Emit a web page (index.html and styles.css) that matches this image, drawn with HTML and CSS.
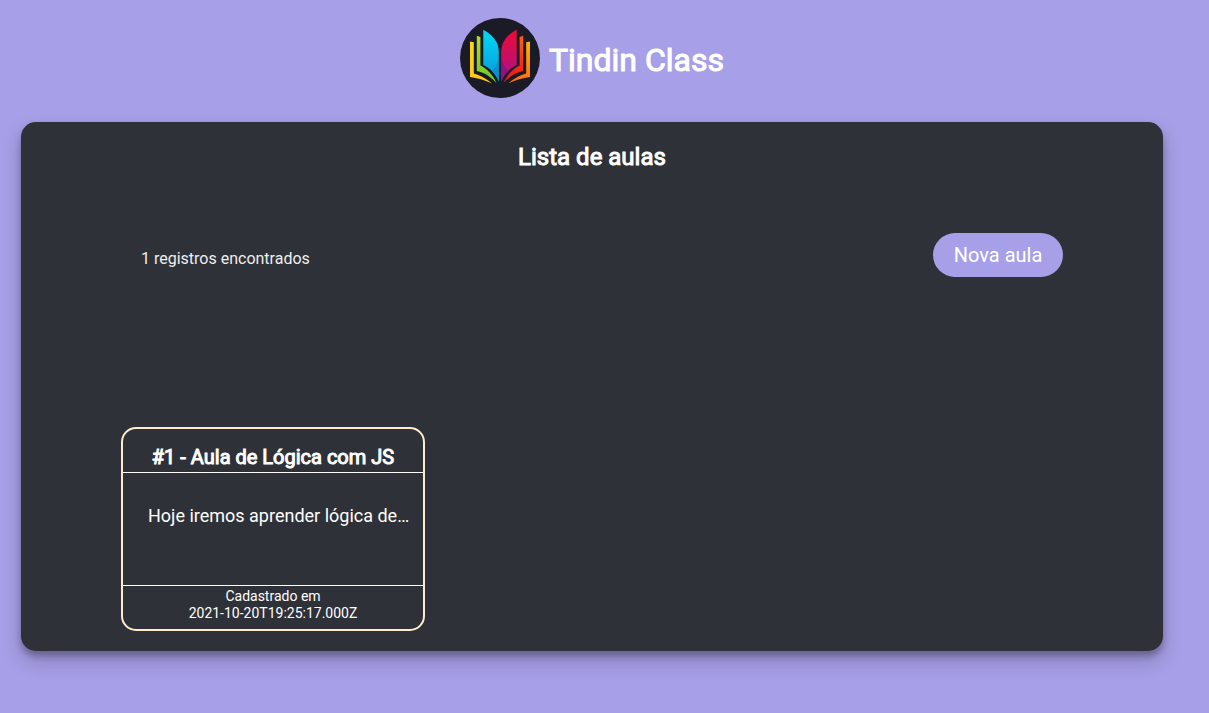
FILE: index.html
```html
<!DOCTYPE html>
<html lang="pt-BR">
<head>
<meta charset="utf-8">
<meta name="viewport" content="width=device-width, initial-scale=1">
<title>Tindin Class</title>
<link rel="stylesheet" href="styles.css">
</head>
<body>
<header class="brand">
  <svg class="brand-logo" viewBox="0 0 80 80" aria-hidden="true">
    <defs>
      <linearGradient id="yellow" x1="0" y1="0" x2="0" y2="1"><stop offset="0" stop-color="#f5d916"/><stop offset="1" stop-color="#ffc61a"/></linearGradient>
      <linearGradient id="green" x1="0" y1="0" x2="0" y2="1"><stop offset="0" stop-color="#b0dc1c"/><stop offset="1" stop-color="#6cc832"/></linearGradient>
      <linearGradient id="blue" x1="0" y1="0" x2="0" y2="1"><stop offset="0" stop-color="#00daf5"/><stop offset="1" stop-color="#0a96d6"/></linearGradient>
      <linearGradient id="pink" x1="0" y1="0" x2="0" y2="1"><stop offset="0" stop-color="#ee0a34"/><stop offset="1" stop-color="#a8128e"/></linearGradient>
      <linearGradient id="red" x1="0" y1="0" x2="0" y2="1"><stop offset="0" stop-color="#ff6200"/><stop offset="1" stop-color="#ee1020"/></linearGradient>
      <linearGradient id="orange" x1="0" y1="0" x2="0" y2="1"><stop offset="0" stop-color="#ffb400"/><stop offset="1" stop-color="#ff6c10"/></linearGradient>
    </defs>
    <circle cx="40" cy="40" r="40" fill="#1b1a27"/>
    <path fill="url(#yellow)" d="M10 23.500L13.800 24.300V55.500C20 57 26 60.500 32 65.500C25 62 17 60 10 59Z"/>
    <path fill="url(#green)" d="M16.800 17.700L20.400 19V47.500C27 50.500 33 57 36.500 65C30.500 59 25 54.500 16.800 53Z"/>
    <path fill="url(#blue)" d="M23.300 11.700C29 14.500 34 19 37 25C38.300 28 38.800 31 38.800 35V64C36 56 30 50 23.300 47Z"/>
    <path fill="#078acb" d="M38.800 39V64C37 59 34.500 55.500 32 53C35.500 49 37.500 45 38.800 39Z" opacity=".7"/>
    <path fill="url(#pink)" d="M56.700 11.700C51 14.500 46 19 43 25C41.700 28 41.200 31 41.200 35V64C44 56 50 50 56.700 47Z"/>
    <path fill="#7d1485" d="M41.200 39V64C43 59 45.500 55.500 48 53C44.500 49 42.500 45 41.200 39Z" opacity=".75"/>
    <path fill="url(#red)" d="M63.200 17.700L59.600 19V47.500C53 50.500 47 57 43.500 65C49.500 59 55 54.500 63.200 53Z"/>
    <path fill="url(#orange)" d="M70 23.500L66.200 24.300V55.500C60 57 54 60.500 48 65.500C55 62 63 60 70 59Z"/>
  </svg>
  <h1 class="brand-name">Tindin Class</h1>
</header>
<main class="panel">
  <h2 class="panel-title">Lista de aulas</h2>
  <div class="toolbar">
    <p class="count">1 registros encontrados</p>
    <button class="new-button" type="button">Nova aula</button>
  </div>
  <section class="lessons">
    <article class="lesson">
      <h3 class="lesson-title">#1 - Aula de Lógica com JS</h3>
      <p class="lesson-text">Hoje iremos aprender lógica de…</p>
      <footer class="lesson-date">Cadastrado em<br>2021-10-20T19:25:17.000Z</footer>
    </article>
  </section>
</main>
</body>
</html>
```
FILE: styles.css
```css
* {
  box-sizing: border-box;
  margin: 0;
  padding: 0;
}

body {
  padding: 18px 46px 62px 21px;
  background: #a79fe7;
  color: #fff;
  font-family: Roboto, sans-serif;
}

h1, h2, h3 {
  font-weight: 400;
  -webkit-text-stroke: 1px #fff;
}

.brand {
  display: flex;
  justify-content: center;
  align-items: center;
  gap: 9px;
}

.brand-logo {
  width: 80px;
  height: 80px;
}

.brand-name {
  padding-top: 4px;
  font-size: 32px;
  line-height: 40px;
}

.panel {
  margin-top: 24px;
  padding: 20px 100px;
  border-radius: 15px;
  background: #2f3138;
  box-shadow: 0 10px 20px rgba(0, 0, 0, .2), 0 5px 6px rgba(0, 0, 0, .25);
}

.panel-title {
  font-size: 24px;
  line-height: 30px;
  text-align: center;
}

.toolbar {
  display: flex;
  justify-content: space-between;
  align-items: center;
  margin-top: 61px;
  padding-left: 20px;
}

.count {
  padding-top: 8px;
  color: #eee;
  font-size: 16px;
  line-height: 20px;
}

.new-button {
  min-width: 130px;
  padding: 10px 20px;
  border: 0;
  border-radius: 22px;
  background: #a79fe7;
  color: #fff;
  font-family: inherit;
  font-size: 20px;
  line-height: 24px;
}

.lessons {
  display: flex;
  flex-wrap: wrap;
  gap: 20px;
  margin-top: 150px;
}

.lesson {
  width: 304px;
  border: 2px solid #ffebcd;
  border-radius: 15px;
  text-align: center;
}

.lesson-title {
  padding: 15px 0 1px;
  border-bottom: 1px solid #fff;
  font-size: 20px;
  line-height: 27px;
}

.lesson-text {
  height: 112px;
  padding: 32px 10px 0 25px;
  overflow: hidden;
  font-size: 18px;
  line-height: 22px;
  text-align: left;
  text-overflow: ellipsis;
  white-space: nowrap;
}

.lesson-date {
  padding: 2px 0 7px;
  border-top: 1px solid #fff;
  font-size: 14px;
  line-height: 17px;
}
```
